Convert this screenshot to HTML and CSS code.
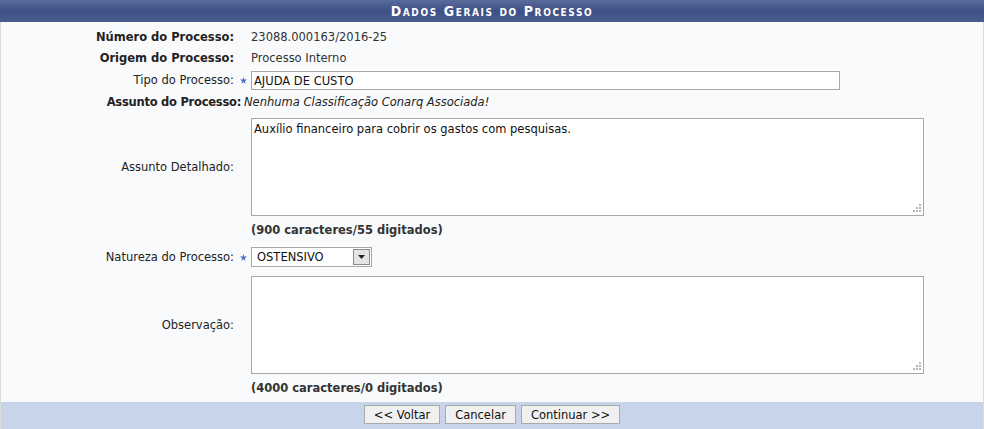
FILE: index.html
```html
<!DOCTYPE html>
<html lang="pt-BR">
<head>
    <meta charset="UTF-8">
    <title>Dados Gerais do Processo</title>
    <link rel="stylesheet" href="styles.css">
</head>
<body>
    <div class="panel">
        <div class="panel-title">Dados Gerais do Processo</div>

        <div class="form">
            <div class="row">
                <div class="label bold">Número do Processo:<span class="req"></span></div>
                <div class="value">23088.000163/2016-25</div>
            </div>
            <div class="row">
                <div class="label bold">Origem do Processo:<span class="req"></span></div>
                <div class="value">Processo Interno</div>
            </div>
            <div class="row row-input">
                <div class="label">Tipo do Processo:<span class="req"><svg class="star" width="7" height="7" viewBox="0 0 10 10"><path d="M5 0 L6.2 3.6 L10 3.7 L7 6 L8.1 9.8 L5 7.6 L1.9 9.8 L3 6 L0 3.7 L3.8 3.6 Z" fill="#4d72c8"/></svg></span></div>
                <div class="value"><input type="text" class="text-field" value="AJUDA DE CUSTO"></div>
            </div>
            <div class="row row-plain">
                <div class="label bold tight">Assunto do Processo:</div>
                <div class="value"><em>Nenhuma Classificação Conarq Associada!</em></div>
            </div>
            <div class="row row-area">
                <div class="label">Assunto Detalhado:<span class="req"></span></div>
                <div class="value">
                    <span class="area-wrap">
                        <textarea class="area">Auxílio financeiro para cobrir os gastos com pesquisas.</textarea>
                        <svg class="grip" width="9" height="9" viewBox="0 0 9 9"><g fill="#b5b5b5"><rect x="7" y="0" width="2" height="2"/><rect x="4" y="3" width="2" height="2"/><rect x="7" y="3" width="2" height="2"/><rect x="1" y="6" width="2" height="2"/><rect x="4" y="6" width="2" height="2"/><rect x="7" y="6" width="2" height="2"/></g></svg>
                    </span>
                </div>
            </div>
            <div class="row row-hint">
                <div class="label"><span class="req"></span></div>
                <div class="value bold">(900 caracteres/55 digitados)</div>
            </div>
            <div class="row row-select">
                <div class="label">Natureza do Processo:<span class="req"><svg class="star" width="7" height="7" viewBox="0 0 10 10"><path d="M5 0 L6.2 3.6 L10 3.7 L7 6 L8.1 9.8 L5 7.6 L1.9 9.8 L3 6 L0 3.7 L3.8 3.6 Z" fill="#4d72c8"/></svg></span></div>
                <div class="value">
                    <span class="select-wrap">
                        <select class="select">
                            <option>OSTENSIVO</option>
                            <option>SIGILOSO</option>
                        </select>
                        <span class="select-btn"><svg width="7" height="4" viewBox="0 0 7 4"><path d="M0 0 H7 L3.5 4 Z" fill="#222"/></svg></span>
                    </span>
                </div>
            </div>
            <div class="row row-area">
                <div class="label">Observação:<span class="req"></span></div>
                <div class="value">
                    <span class="area-wrap">
                        <textarea class="area"></textarea>
                        <svg class="grip" width="9" height="9" viewBox="0 0 9 9"><g fill="#b5b5b5"><rect x="7" y="0" width="2" height="2"/><rect x="4" y="3" width="2" height="2"/><rect x="7" y="3" width="2" height="2"/><rect x="1" y="6" width="2" height="2"/><rect x="4" y="6" width="2" height="2"/><rect x="7" y="6" width="2" height="2"/></g></svg>
                    </span>
                </div>
            </div>
            <div class="row row-hint">
                <div class="label"><span class="req"></span></div>
                <div class="value bold">(4000 caracteres/0 digitados)</div>
            </div>
        </div>

        <div class="actions">
            <button type="button">&lt;&lt; Voltar</button>
            <button type="button">Cancelar</button>
            <button type="button">Continuar &gt;&gt;</button>
        </div>
    </div>
</body>
</html>
```

FILE: styles.css
```css
body {
    margin: 0;
    font-family: "DejaVu Sans", Verdana, sans-serif;
    font-size: 11.5px;
    color: #222;
    background: #fff;
}

.panel {
    height: 429px;
    background: #f9fafc;
    border-left: 1px solid #dcdcdc;
    border-right: 1px solid #dcdcdc;
    box-sizing: border-box;
    display: flex;
    flex-direction: column;
}

.panel-title {
    height: 22px;
    margin: 0 -1px;
    background: linear-gradient(#5a6b9d, #3e4f86 50%, #4b5c8f);
    color: #fff;
    font-family: "DejaVu Sans Condensed", "DejaVu Sans", sans-serif;
    font-weight: bold;
    font-variant: small-caps;
    font-size: 14px;
    letter-spacing: 1.6px;
    line-height: 23px;
    text-align: center;
}

.form {
    padding-top: 5px;
    flex: 1;
}

.row {
    display: grid;
    grid-template-columns: 246px 1fr;
    column-gap: 4px;
    align-items: center;
    padding: 2px 0;
    line-height: 17px;
}

/* row without the required-field slot */
.row-plain {
    grid-template-columns: 240px 1fr;
    column-gap: 3px;
}

.row-area {
    padding: 5px 0 0;
}

.row-hint {
    padding: 6px 0 4px;
}

.row-select {
    padding: 4px 0 4px;
}

.label {
    display: flex;
    justify-content: flex-end;
    align-items: center;
    color: #222;
}

.bold {
    font-weight: bold;
}

.tight {
    letter-spacing: -0.25px;
}

.req {
    width: 13px;
    display: flex;
    align-items: center;
}

.star {
    margin-left: 6px;
}

.value {
    color: #333;
}

.value em {
    color: #222;
}

.text-field {
    width: 589px;
    height: 19px;
    box-sizing: border-box;
    border: 1px solid #a8a8a8;
    padding: 0 2px;
    font-family: inherit;
    font-size: 11.5px;
    color: #111;
    background: #fff;
    display: block;
}

.area-wrap {
    position: relative;
    display: block;
    width: 673px;
}

.area {
    display: block;
    width: 673px;
    height: 98px;
    box-sizing: border-box;
    border: 1px solid #a8a8a8;
    padding: 3px 2px;
    margin: 0;
    font-family: inherit;
    font-size: 11.5px;
    line-height: 14px;
    color: #111;
    background: #fff;
    resize: none;
}

.grip {
    position: absolute;
    right: 3px;
    bottom: 3px;
}

.select-wrap {
    position: relative;
    display: block;
    width: 121px;
    height: 20px;
}

.select {
    appearance: none;
    -webkit-appearance: none;
    width: 121px;
    height: 20px;
    box-sizing: border-box;
    border: 1px solid #a8a8a8;
    border-radius: 0;
    padding: 0 0 0 5px;
    font-family: inherit;
    font-size: 11.5px;
    color: #111;
    background: #fff;
}

.select-btn {
    position: absolute;
    right: 2px;
    top: 2px;
    width: 15px;
    height: 14px;
    background: #e4e4e4;
    border: 1px solid #8a8a8a;
    display: flex;
    align-items: center;
    justify-content: center;
}

.actions {
    height: 27px;
    background: #c8d4ea;
    display: flex;
    justify-content: center;
    align-items: flex-start;
    gap: 5px;
    padding-top: 3px;
    box-sizing: border-box;
}

.actions button {
    height: 19px;
    padding: 0 9px;
    background: #f0f0f0;
    border: 1px solid #a9a9a9;
    border-radius: 0;
    font-family: inherit;
    font-size: 11.5px;
    color: #111;
    cursor: pointer;
}
```
